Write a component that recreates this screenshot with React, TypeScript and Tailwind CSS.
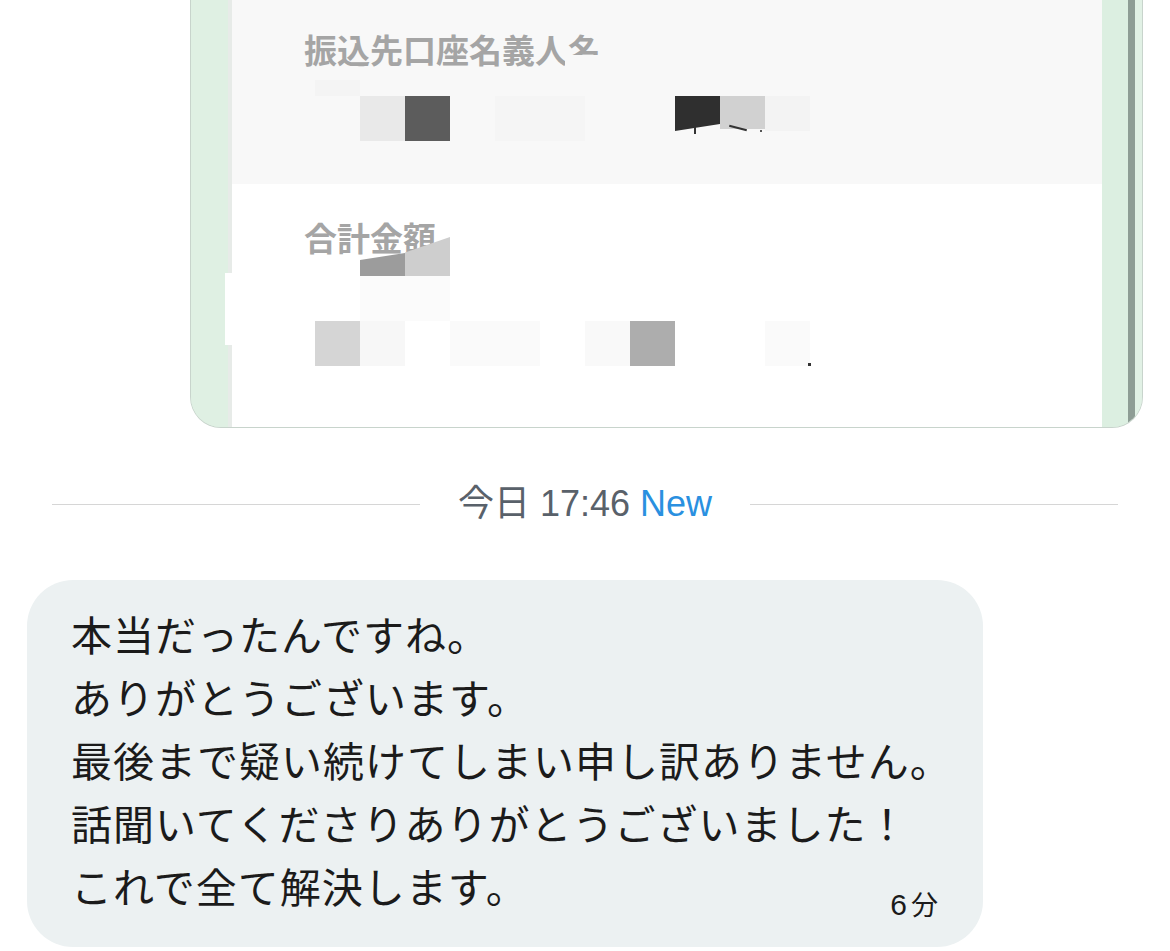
import React from 'react';

// redaction mosaic tiles laid over the transfer screenshot
const tiles = [
  'left-[83px] top-[80px] w-[45px] h-[16px] bg-[#f4f4f4]',
  'left-[128px] top-[96px] w-[45px] h-[45px] bg-[#e9e9e9]',
  'left-[173px] top-[96px] w-[45px] h-[45px] bg-[#5c5c5c]',
  'left-[263px] top-[96px] w-[90px] h-[45px] bg-[#f5f5f5]',
  'left-[333px] top-[55px] w-[62px] h-[41px] bg-[#f8f8f8]',
  'left-[443px] top-[96px] w-[45px] h-[35px] bg-[#2f2f2f] [clip-path:polygon(0_0,100%_0,100%_80%,0_100%)]',
  'left-[488px] top-[96px] w-[45px] h-[33px] bg-[#d1d1d1]',
  'left-[533px] top-[96px] w-[45px] h-[35px] bg-[#f3f3f3]',
  'left-[462px] top-[127px] w-[2px] h-[7px] bg-[#333333]',
  'left-[497px] top-[127px] w-[18px] h-[2px] bg-[#333333] rotate-[14deg]',
  'left-[528px] top-[130px] w-[2px] h-[2px] bg-[#555555]',
  'left-[128px] top-[253px] w-[45px] h-[23px] bg-[#9c9c9c] [clip-path:polygon(0_30%,100%_0,100%_100%,0_100%)]',
  'left-[173px] top-[237px] w-[45px] h-[39px] bg-[#cecece] [clip-path:polygon(0_40%,100%_0,100%_100%,0_100%)]',
  'left-[128px] top-[276px] w-[90px] h-[45px] bg-[#fbfbfb]',
  'left-[83px] top-[321px] w-[45px] h-[45px] bg-[#d5d5d5]',
  'left-[128px] top-[321px] w-[45px] h-[45px] bg-[#f7f7f7]',
  'left-[218px] top-[321px] w-[90px] h-[45px] bg-[#fafafa]',
  'left-[353px] top-[321px] w-[45px] h-[45px] bg-[#f9f9f9]',
  'left-[398px] top-[321px] w-[45px] h-[45px] bg-[#adadad]',
  'left-[533px] top-[321px] w-[45px] h-[45px] bg-[#fafafa]',
  'left-[576px] top-[363px] w-[3px] h-[3px] bg-[#333333]',
];

const lines = [
  '本当だったんですね。',
  'ありがとうございます。',
  '最後まで疑い続けてしまい申し訳ありません。',
  '話聞いてくださりありがとうございました！',
];

const App = () => {
  return (
    <div className="w-[1170px] h-[951px] bg-white overflow-hidden">
      {/* shared screenshot bubble */}
      <div className="pl-[190px] pr-[27px]">
        <div className="relative h-[428px] flex rounded-b-[31px] border border-t-0 border-[#c8d4cc] bg-[#dff0e3] overflow-hidden">
          <div className="w-[37px] bg-[#dff0e3]" />
          <div className="w-[4px] bg-[#e7ebe8]" />
          <div className="relative w-[870px] flex flex-col font-['Noto_Sans_CJK_JP',sans-serif] font-bold text-[33px] leading-none text-[#a5a5a5]">
            <div className="h-[184px] bg-[#f8f8f8] pt-[33px] pl-[72px]">
              振込先口座名義人名
            </div>
            <div className="flex-1 bg-white pt-[37px] pl-[72px]">合計金額</div>
            {tiles.map((t) => (
              <div key={t} className={'absolute ' + t} />
            ))}
          </div>
          <div className="w-[26px] bg-[#dcefe1]" />
          <div className="w-[7px] bg-[#8e9d95]" />
          <div className="w-[7px] bg-[#e1f1e5]" />
          <div className="absolute left-[34px] top-[273px] w-[8px] h-[72px] bg-white" />
        </div>
      </div>

      {/* date divider */}
      <div className="mt-[56px] px-[52px] flex items-center gap-[38px]">
        <div className="flex-1 h-px bg-[#d6d6d6]" />
        <div className="text-[36px] leading-[40px] font-['Liberation_Sans','Noto_Sans_CJK_JP',sans-serif] text-[#59616a] whitespace-nowrap">
          今日 17:46 <span className="text-[#2a90e0]">New</span>
        </div>
        <div className="flex-1 h-px bg-[#d6d6d6]" />
      </div>

      {/* received message */}
      <div className="mt-[56px] ml-[27px] w-[956px] rounded-[46px] bg-[#ecf1f2] pl-[44px] pr-[45px] pt-[22px] pb-[30px] font-['Noto_Sans_CJK_JP',sans-serif] text-[41px] tracking-[1px] leading-[63px] text-[#1b1b1b]">
        {lines.map((l) => (
          <div key={l} className="whitespace-nowrap">
            {l}
          </div>
        ))}
        <div className="flex items-end justify-between">
          <div className="whitespace-nowrap">これで全て解決します。</div>
          <div className="flex items-baseline text-[30px] tracking-normal leading-none -mb-[3px] font-['Liberation_Sans','Noto_Sans_CJK_JP',sans-serif]">
            <span>6</span>
            <span className="ml-[4px] text-[27px]">分</span>
          </div>
        </div>
      </div>
    </div>
  );
};

export default App;
